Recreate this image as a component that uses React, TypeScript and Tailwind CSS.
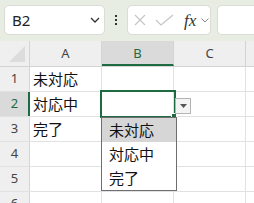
import React from "react";

const JP = { fontFamily: '"Noto Sans CJK JP", "Noto Sans", sans-serif' };
const UI = { fontFamily: '"Noto Sans", "Liberation Sans", sans-serif' };

const cols = ["A", "B", "C"];
const rows: { n: number; a: string }[] = [
  { n: 1, a: "未対応" },
  { n: 2, a: "対応中" },
  { n: 3, a: "完了" },
  { n: 4, a: "" },
  { n: 5, a: "" },
  { n: 6, a: "" },
];

export default function App() {
  return (
    <div className="relative w-[254px] h-[203px] overflow-hidden bg-white" style={UI}>
      {/* Toolbar */}
      <div className="flex h-[41px] items-start bg-[#e8ede3] pl-[4px] pt-[5px]">
        <div className="flex h-[30px] w-[101px] items-center justify-between rounded-[5px] border border-[#d9ddd5] bg-white pl-[7px] pr-[4px]">
          <span className="text-[15px] leading-none text-[#222]">B2</span>
          <svg width="10" height="6" viewBox="0 0 10 6" className="mr-[0px]">
            <path d="M1 1 L5 5 L9 1" fill="none" stroke="#333" strokeWidth="1.3" />
          </svg>
        </div>
        <div className="flex h-[30px] w-[22px] flex-col items-center justify-center gap-[2px]">
          <div className="h-[2px] w-[2px] bg-[#333]" />
          <div className="h-[2px] w-[2px] bg-[#333]" />
          <div className="h-[2px] w-[2px] bg-[#333]" />
        </div>
        <div className="flex h-[30px] w-[84px] items-center rounded-[5px] border border-[#d9ddd5] bg-white pl-[5px]">
          <svg width="12" height="12" viewBox="0 0 12 12" className="ml-[1px]">
            <path d="M1 1 L11 11 M11 1 L1 11" stroke="#c4c4c4" strokeWidth="1.1" fill="none" />
          </svg>
          <svg width="19" height="12" viewBox="0 0 19 12" className="ml-[9px]">
            <path d="M1 6 L6 11 L18 1" stroke="#c4c4c4" strokeWidth="1.1" fill="none" />
          </svg>
          <span
            className="ml-[10px] text-[17px] italic leading-none text-[#333]"
            style={{ fontFamily: '"Liberation Serif", serif' }}
          >
            fx
          </span>
          <svg width="8" height="5" viewBox="0 0 8 5" className="ml-[5px]">
            <path d="M0.5 0.5 L4 4 L7.5 0.5" fill="none" stroke="#888" strokeWidth="1" />
          </svg>
        </div>
        <div className="ml-[6px] h-[30px] flex-1 rounded-l-[5px] border border-r-0 border-[#d9ddd5] bg-white" />
      </div>

      {/* Column header */}
      <div className="flex h-[26px] border-b border-[#d4d4d4] bg-[#efefef]">
        <div className="relative w-[30px] border-r border-[#d4d4d4]">
          <svg width="17" height="17" viewBox="0 0 17 17" className="absolute bottom-[3px] right-[3px]">
            <path d="M16 0 L16 16 L0 16 Z" fill="#dcdcdc" />
          </svg>
        </div>
        {cols.map((c) => (
          <div
            key={c}
            className={
              c === "B"
                ? "flex w-[72px] items-center justify-center border-b-2 border-r border-b-[#1e6b41] border-r-[#d4d4d4] bg-[#dadada] pt-[2px] text-[13px] text-[#1e6b41]"
                : "flex w-[72px] items-center justify-center border-r border-[#d4d4d4] text-[13px] text-[#444]"
            }
          >
            {c}
          </div>
        ))}
        <div className="flex-1" />
      </div>

      {/* Rows */}
      {rows.map((r) => (
        <div key={r.n} className="flex h-[25px] border-b border-[#e1e1e1]">
          <div
            className={
              r.n === 2
                ? "flex w-[30px] items-center justify-center border-r-2 border-[#1e6b41] bg-[#dadada] pl-[1px] text-[13px] text-[#1e6b41]"
                : "flex w-[30px] items-center justify-center border-r border-[#d4d4d4] bg-[#efefef] text-[13px] text-[#444]"
            }
          >
            {r.n}
          </div>
          <div className="flex w-[72px] items-center border-r border-[#e1e1e1] pl-[3px] text-[15px] text-[#111]" style={JP}>
            {r.a}
          </div>
          <div className="w-[72px] border-r border-[#e1e1e1]" />
          <div className="w-[72px] border-r border-[#e1e1e1]" />
          <div className="flex-1" />
        </div>
      ))}

      {/* Selection outline B2 */}
      <div className="absolute left-[100px] top-[90px] h-[28px] w-[76px] border-2 border-[#1e6b41]" />
      <div className="absolute left-[171px] top-[113px] h-[6px] w-[6px] border border-white bg-[#1e6b41]" />

      {/* Dropdown button */}
      <div className="absolute left-[175px] top-[98px] flex h-[16px] w-[16px] items-center justify-center border border-[#b4b4b4] bg-[#f4f4f4]">
        <svg width="7" height="4" viewBox="0 0 7 4">
          <path d="M0 0 L7 0 L3.5 4 Z" fill="#555" />
        </svg>
      </div>

      {/* Dropdown list */}
      <div className="absolute left-[101px] top-[117px] flex w-[76px] flex-col border border-[#6f6f6f] bg-white py-[0px] text-[15px] text-[#111]" style={JP}>
        <div className="flex h-[24px] items-center bg-[#d6d6d6] pl-[7px]">未対応</div>
        <div className="flex h-[24px] items-center pl-[7px]">対応中</div>
        <div className="flex h-[24px] items-center pl-[7px]">完了</div>
      </div>
    </div>
  );
}
